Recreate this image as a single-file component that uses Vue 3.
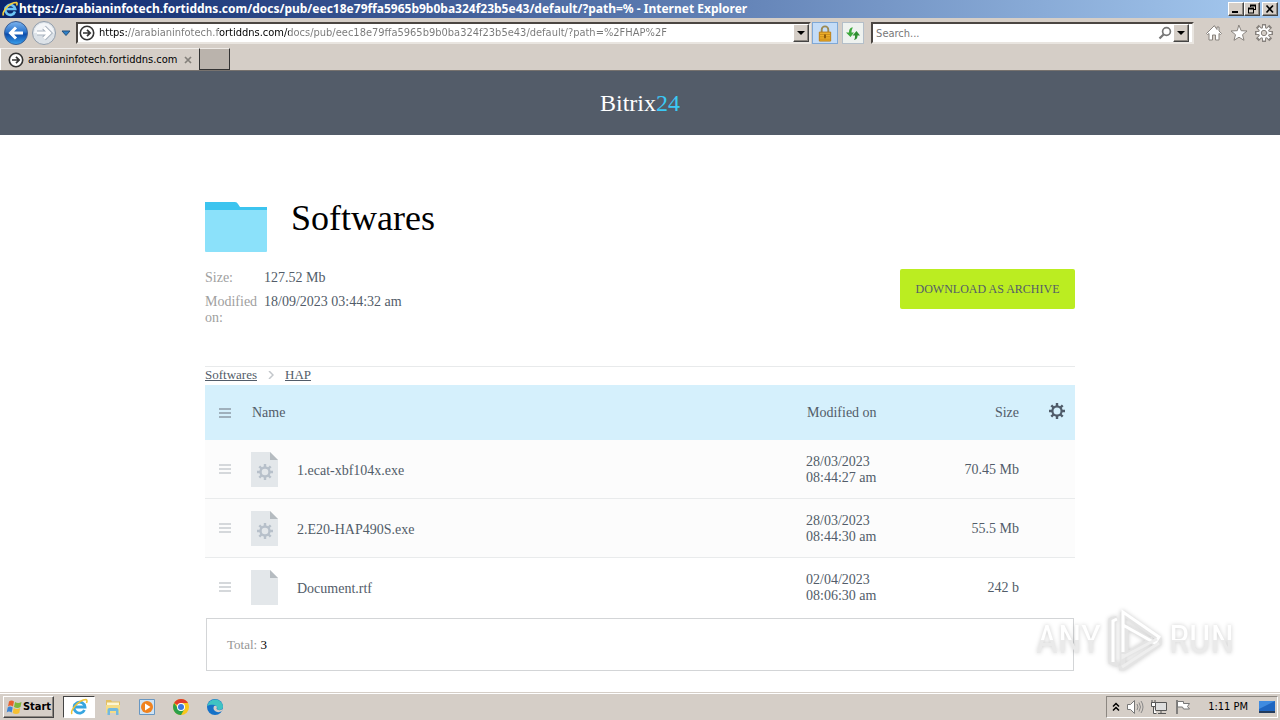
<template>
  <div class="desktop">
    <header class="titlebar">
      <svg class="title-icon" viewBox="0 0 16 16" aria-hidden="true">
        <path d="M13 10.5A5 5 0 1 1 13.2 8H4.5" fill="none" stroke="#6cc4f5" stroke-width="2.6" />
        <path d="M1.5 14.5C-.5 11 7 1.5 14.5 1.5 15.5 2 15 3.5 14.5 4.5" fill="none" stroke="#f6cf3c" stroke-width="1.6" />
      </svg>
      <h1 class="title-text">{{ windowTitle }}</h1>
      <div class="title-buttons">
        <button type="button" class="bevel win-button" aria-label="Minimize">
          <svg viewBox="0 0 12 10"><path d="M2 7h6v2H2z" /></svg>
        </button>
        <button type="button" class="bevel win-button" aria-label="Restore">
          <svg viewBox="0 0 12 10">
            <path d="M4 .5h6V6H8V5h1V2.5H5V3H4zM2 3.5h6V9.5H2zM3 5.5v3h4v-3z" fill-rule="evenodd" />
          </svg>
        </button>
        <button type="button" class="bevel win-button win-close" aria-label="Close">
          <svg viewBox="0 0 12 10"><path d="M2.5 1.5 9 8.5M9 1.5 2.5 8.5" stroke="#000" stroke-width="1.7" /></svg>
        </button>
      </div>
    </header>

    <div class="toolbar">
      <button type="button" class="nav-button" aria-label="Back">
        <svg viewBox="0 0 26 26">
          <defs>
            <linearGradient id="back" x2="0" y2="1">
              <stop offset="0" stop-color="#7db4ee" />
              <stop offset=".45" stop-color="#2c75cd" />
              <stop offset=".55" stop-color="#0b4cab" />
              <stop offset="1" stop-color="#3ba2ee" />
            </linearGradient>
          </defs>
          <circle cx="13" cy="13" r="11.5" fill="url(#back)" stroke="#3c5f94" />
          <path d="M20 13H8M13 7.5 7.5 13l5.5 5.5" fill="none" stroke="#fff" stroke-width="3" />
        </svg>
      </button>
      <button type="button" class="nav-button" aria-label="Forward">
        <svg viewBox="0 0 26 26">
          <circle cx="13" cy="13" r="11.5" fill="#dce2e8" stroke="#929eac" />
          <path d="M3 13a10 10 0 0 1 20 0z" fill="#f3f5f8" />
          <path d="M6 13h12M13 7.5l5.5 5.5-5.5 5.5" fill="none" stroke="#a9b3bf" stroke-width="5" />
          <path d="M6 13h12M13 7.5l5.5 5.5-5.5 5.5" fill="none" stroke="#fff" stroke-width="3" />
        </svg>
      </button>
      <button type="button" class="history-button" aria-label="Recent pages">
        <svg viewBox="0 0 10 7"><path d="M1 1h8L5 5.5z" fill="#2d80c8" stroke="#234f7c" /></svg>
      </button>
      <div class="sunken address">
        <svg class="site-icon" viewBox="0 0 16 16" aria-hidden="true">
          <circle cx="8" cy="8" r="6.7" fill="#fff" stroke="#333" stroke-width="1.6" />
          <path d="M4 8h7M8 4.8 11.2 8 8 11.2" fill="none" stroke="#333" stroke-width="1.7" />
        </svg>
        <input v-model="address" class="address-input" type="text" aria-label="Address" spellcheck="false" />
        <button type="button" class="bevel drop-button" aria-label="Show address list">
          <svg viewBox="0 0 8 4"><path d="M0 0h8L4 4z" /></svg>
        </button>
      </div>
      <button type="button" class="tool-button tool-lock" aria-label="Security report">
        <svg viewBox="0 0 16 18">
          <path d="M4.5 8V5a3.5 3.5 0 0 1 7 0v3" fill="none" stroke="#9c8a52" stroke-width="2" />
          <path d="M2 7.5h12V17H2z" fill="#eeb02a" stroke="#bb7a12" />
          <path d="M2.5 10h11M2.5 12.5h11M2.5 15h11" stroke="#c98a19" />
          <path d="M7 10h2v4H7z" fill="#8b5a0c" />
        </svg>
      </button>
      <button type="button" class="tool-button" aria-label="Refresh">
        <svg viewBox="0 0 16 16">
          <path d="M8 2C5 2 4 4 4 7H1l4.500 4.500L9 7H6.500C6.500 4.500 7 3.500 8 2z" fill="#3ca83c" />
          <path d="M9 14.500c3-.5 3.500-2.500 3.500-4.500H15L11.500 5.500 7.500 10h2.500c0 2 0 3-1 4.500z" fill="#2e8f31" />
        </svg>
      </button>
      <form class="sunken search" @submit.prevent>
        <input v-model="query" class="search-input" type="text" placeholder="Search..." aria-label="Search" />
        <button type="submit" class="search-go" aria-label="Go">
          <svg viewBox="0 0 14 14">
            <circle cx="8.5" cy="5.5" r="3.9" fill="none" stroke="#777" stroke-width="1.7" />
            <path d="M5.8 8.2 1.5 12.5" stroke="#777" stroke-width="2.2" />
          </svg>
        </button>
        <button type="button" class="bevel drop-button" aria-label="Search options">
          <svg viewBox="0 0 8 4"><path d="M0 0h8L4 4z" /></svg>
        </button>
      </form>
      <div class="commands">
        <button type="button" class="command" aria-label="Home">
          <svg viewBox="0 0 18 18">
            <path d="M9 2 1.5 9.5l1 1L4 9.500V16h3.500v-5h3v5H14V9.500l1.500 1 1-1L14 7V3h-2v2z" />
          </svg>
        </button>
        <button type="button" class="command" aria-label="Favorites">
          <svg viewBox="0 0 18 18">
            <path d="m9 1.500 2.200 5.200 5.800.3-4.500 3.700 1.500 5.600L9 13.200l-5 3.100 1.500-5.600L1 7l5.800-.3z" />
          </svg>
        </button>
        <button type="button" class="command" aria-label="Tools">
          <svg viewBox="0 0 18 18">
            <path :d="toolTeeth" stroke-width="4" />
            <circle cx="9" cy="9" r="5.5" />
            <path :d="toolTeeth" class="tooth-fill" />
            <circle cx="9" cy="9" r="2.7" fill="#d5cec7" />
          </svg>
        </button>
      </div>
    </div>

    <nav class="tabs" aria-label="Tabs">
      <div class="tab">
        <svg class="site-icon" viewBox="0 0 16 16" aria-hidden="true">
          <circle cx="8" cy="8" r="6.7" fill="#fff" stroke="#333" stroke-width="1.6" />
          <path d="M4 8h7M8 4.8 11.2 8 8 11.2" fill="none" stroke="#333" stroke-width="1.7" />
        </svg>
        <span class="tab-label">arabianinfotech.fortiddns.com</span>
        <button type="button" class="tab-close" aria-label="Close tab">
          <svg viewBox="0 0 8 8"><path d="m1 1 6 6M7 1 1 7" stroke="#84807b" stroke-width="1.7" /></svg>
        </button>
      </div>
      <button type="button" class="new-tab" aria-label="New tab"></button>
    </nav>

    <div class="page">
      <div class="brand">Bitrix<span class="brand-number">24</span></div>

      <main class="content">
        <div class="folder">
          <svg class="folder-icon" viewBox="0 0 62 50" aria-hidden="true">
            <path d="M0 0h30q2 0 3 2l2 3h27v10H0z" fill="#3cc4ef" />
            <path d="M0 8h62v41q0 1-1 1H1q-1 0-1-1z" fill="#8be1fa" />
          </svg>
          <h2 class="folder-name">Softwares</h2>
        </div>

        <div class="summary">
          <dl class="details">
            <dt>Size:</dt>
            <dd>127.52 Mb</dd>
            <dt>Modified on:</dt>
            <dd>18/09/2023 03:44:32 am</dd>
          </dl>
          <button type="button" class="download">DOWNLOAD AS ARCHIVE</button>
        </div>

        <nav class="breadcrumbs" aria-label="Folders">
          <a href="#">Softwares</a>
          <svg class="crumb-arrow" viewBox="0 0 6 8" aria-hidden="true">
            <path d="m1 0 4 4-4 4" fill="none" stroke="#c3c7cb" stroke-width="1.5" />
          </svg>
          <a href="#">HAP</a>
        </nav>

        <table class="files">
          <thead>
            <tr>
              <th class="col-drag"><span class="grip grip-dark"></span></th>
              <th class="col-name">Name</th>
              <th class="col-date">Modified on</th>
              <th class="col-size">Size</th>
              <th class="col-settings">
                <button type="button" class="settings" aria-label="Configure columns">
                  <svg viewBox="0 0 16 16">
                    <circle cx="8" cy="8" r="4.6" fill="none" stroke="#4f5b69" stroke-width="2.2" />
                    <path :d="gearTeeth" stroke="#4f5b69" stroke-width="2.4" />
                  </svg>
                </button>
              </th>
            </tr>
          </thead>
          <tbody>
            <tr v-for="file in files" :key="file.name">
              <td class="col-drag"><span class="grip"></span></td>
              <td class="col-name">
                <div class="file">
                  <svg class="file-icon" viewBox="0 0 27 35" aria-hidden="true">
                    <path d="M0 0h19l8 8v27H0z" fill="#e3e7ea" />
                    <path d="M19 0v8h8z" fill="#b5bbc0" />
                    <g v-if="file.isProgram" transform="translate(6 12)" fill="none" stroke="#b7c0ca">
                      <circle cx="8" cy="8" r="4.5" stroke-width="2.4" />
                      <path :d="gearTeeth" stroke-width="2.4" />
                    </g>
                  </svg>
                  <span class="file-name">{{ file.name }}</span>
                </div>
              </td>
              <td class="col-date">{{ file.date }}<br />{{ file.time }}</td>
              <td class="col-size">{{ file.size }}</td>
              <td class="col-settings"></td>
            </tr>
          </tbody>
        </table>

        <div class="total">Total: <span class="total-count">{{ files.length }}</span></div>
      </main>

      <div class="watermark" aria-hidden="true">
        <span class="watermark-text">ANY</span>
        <svg class="watermark-play" viewBox="0 0 58 64">
          <path d="M7 13v40M17 4v56M11 10 5 12v42l7 3M15 4l38 27v5L18 60h-5M20 18l30 18M20 47l27-16M20 18v29" fill="none" stroke="#e4e4e4" stroke-width="5" />
          <path d="M7 54V13l4-2M17 44V4l36 25-4 6-32-18" fill="none" stroke="#fff" stroke-width="3" />
          <path d="M17 46v3l34-18M16 59l37-24" fill="none" stroke="#eee" stroke-width="3" />
        </svg>
        <span class="watermark-text">RUN</span>
      </div>
    </div>

    <footer class="taskbar">
      <button type="button" class="bevel start">
        <svg viewBox="0 0 16 16" aria-hidden="true">
          <path d="M3 2.5q2.5-2 5 0L7 7.5q-3-2-5 0z" fill="#e8602c" />
          <path d="M9 3q3 2 6.500 0L14.500 8q-3 2-6.500 0z" fill="#7db83a" />
          <path d="M1.700 8.500q2-2 5 0l-1 5q-3-2-5 0z" fill="#3c84d4" />
          <path d="M7.700 9q3 2 6.500 0l-1 5q-3 2-6.500 0z" fill="#f5c032" />
        </svg>
        Start
      </button>
      <button type="button" class="task is-active" aria-label="Internet Explorer">
        <svg viewBox="0 0 18 18">
          <path d="M14.5 12A5.5 5.5 0 1 1 15 9H5" fill="none" stroke="#36a5e0" stroke-width="2.8" />
          <path d="M2 16C0 13 8 2 16 1.500c1.500.5 1 2 .5 3.500" fill="none" stroke="#efc336" stroke-width="1.5" />
        </svg>
      </button>
      <button type="button" class="task" aria-label="Explorer">
        <svg viewBox="0 0 18 18">
          <path d="M2 2h5l1 1.500h8V14H2z" fill="#e3bf62" />
          <path d="M3 4.500h12v3H3z" fill="#fdf6d3" />
          <path d="M2 7h14v8H2z" fill="#f5dc87" />
          <path d="M3.500 17v-5q0-2 2-2h7q2 0 2 2v5H12v-4H6v4z" fill="#72b9df" />
        </svg>
      </button>
      <button type="button" class="task" aria-label="Media Player">
        <svg viewBox="0 0 18 18">
          <path d="M1.500 1.500h15v15h-15z" fill="#cfe3f4" stroke="#6897c2" />
          <circle cx="9" cy="9" r="6" fill="#f0821e" />
          <path d="M7 5.500v7L12.500 9z" fill="#fff" />
        </svg>
      </button>
      <button type="button" class="task" aria-label="Chrome">
        <svg viewBox="0 0 18 18">
          <circle cx="9" cy="9" r="8" fill="#f9c71c" />
          <path d="M9 9 2.100 5A8 8 0 0 1 16 5H9z" fill="#e03c2d" />
          <path d="M9 9H5L2.100 5A8 8 0 0 0 9 17l3.500-6z" fill="#2ca04a" />
          <circle cx="9" cy="9" r="4" fill="#fff" />
          <circle cx="9" cy="9" r="3" fill="#3b78e0" />
        </svg>
      </button>
      <button type="button" class="task" aria-label="Edge">
        <svg viewBox="0 0 18 18">
          <circle cx="9" cy="9" r="8" fill="#1672c8" />
          <path d="M1.200 8A8 8 0 0 1 17 8.500c0 3-3 4-6 3 2-4-5-6.500-9.800-3.500z" fill="#3fc3c3" />
          <path d="M8 8q-2 4 3 6 3 .5 5-1l1-2q-3 2-6 .5Q10 10 11 9q-1-2-3-1z" fill="#d5cec7" />
        </svg>
      </button>
      <div class="tray">
        <svg class="tray-more" viewBox="0 0 8 10" aria-hidden="true">
          <path d="m1 4.500 3-3 3 3M1 8.500l3-3 3 3" fill="none" stroke="#000" stroke-width="1.5" />
        </svg>
        <svg class="tray-icon" viewBox="0 0 18 16" aria-hidden="true">
          <path d="M1.500 5.500h3l4-4v13l-4-4h-3z" fill="#fff" stroke="#777" />
          <path d="M11 5q2 3 0 6M13 3.500q3 4.500 0 9M15 2q4 6 0 12" fill="none" stroke="#888" />
        </svg>
        <svg class="tray-icon" viewBox="0 0 18 16" aria-hidden="true">
          <path d="M5.500 3.500h11v8h-11z" fill="#dedede" stroke="#555" />
          <path d="M8 14.500h8M11 12v2" stroke="#555" />
          <path d="M2 1v3M5 1v3M1.500 3.500h4v4h-4zM3.500 7.500v7h3" fill="#fff" stroke="#555" />
        </svg>
        <svg class="tray-icon" viewBox="0 0 18 16" aria-hidden="true">
          <path d="M3 1v14" stroke="#666" stroke-width="1.5" />
          <path d="M3.500 2.500h6v2h6l-2 3 2 2.500h-6l-1-2h-5z" fill="#fff" stroke="#777" />
        </svg>
        <time class="clock">1:11 PM</time>
        <svg class="tray-desktop" viewBox="0 0 16 14" aria-hidden="true">
          <path d="M0 1h16v10H0z" fill="#1f66c1" />
          <path d="M0 1h16L0 9z" fill="#3f8be0" />
          <path d="M0 11h16v2H0z" fill="#233b5c" />
        </svg>
      </div>
    </footer>
  </div>
</template>

<script setup>
import { ref } from 'vue'

const windowTitle =
  'https://arabianinfotech.fortiddns.com/docs/pub/eec18e79ffa5965b9b0ba324f23b5e43/default/?path=% - Internet Explorer'

const address = ref(
  'https://arabianinfotech.fortiddns.com/docs/pub/eec18e79ffa5965b9b0ba324f23b5e43/default/?path=%2FHAP%2F'
)
const query = ref('')

// eight teeth around a 16x16 gear
const gearTeeth =
  'M8 0v3M8 13v3M0 8h3M13 8h3M2.3 2.3l2.2 2.2M11.5 11.5l2.2 2.2M2.3 13.7l2.2-2.2M11.5 4.5l2.2-2.2'

// same thing for the 18x18 toolbar gear
const toolTeeth =
  'M9 1.5v3M9 13.5v3M1.5 9h3M13.500 9h3M3.700 3.700l2.200 2.200M12.100 12.100l2.200 2.200M3.700 14.300l2.200-2.200M12.100 5.900l2.200-2.200'

const files = [
  { name: '1.ecat-xbf104x.exe', date: '28/03/2023', time: '08:44:27 am', size: '70.45 Mb', isProgram: true },
  { name: '2.E20-HAP490S.exe', date: '28/03/2023', time: '08:44:30 am', size: '55.5 Mb', isProgram: true },
  { name: 'Document.rtf', date: '02/04/2023', time: '08:06:30 am', size: '242 b', isProgram: false }
]
</script>

<style>
body {
  margin: 0;
  background: #fff;
}
</style>

<style scoped>
.desktop {
  display: flex;
  flex-direction: column;
  min-height: 100vh;
  font-family: Tahoma, 'DejaVu Sans Condensed', 'DejaVu Sans', sans-serif;
  font-size: 11px;
  color: #000;
}

.desktop * {
  box-sizing: border-box;
}

button {
  display: flex;
  align-items: center;
  justify-content: center;
  padding: 0;
  border: 0;
  background: none;
  font: inherit;
  color: inherit;
}

svg {
  display: block;
  flex: none;
}

.bevel {
  background: #d5cec7;
  border: 1px solid;
  border-color: #fff #444 #444 #fff;
  box-shadow: inset -1px -1px 0 #8c8781;
}

.sunken {
  display: flex;
  align-items: center;
  height: 22px;
  background: #fff;
  border: 2px solid;
  border-color: #4b4642 #e9e5e0 #e9e5e0 #4b4642;
}

/* title bar */
.titlebar {
  display: flex;
  align-items: center;
  height: 18px;
  padding: 0 2px;
  background: linear-gradient(90deg, #0a246a, #a6caf0);
}

.title-icon {
  width: 16px;
  height: 16px;
}

.title-text {
  flex: 1;
  margin: 0 0 0 1px;
  overflow: hidden;
  font-family: Tahoma, 'Noto Sans', sans-serif;
  font-size: 12px;
  line-height: 18px;
  font-weight: bold;
  white-space: nowrap;
  color: #fff;
}

.title-buttons {
  display: flex;
}

.win-button {
  width: 16px;
  height: 14px;
}

.win-button svg {
  width: 12px;
  height: 10px;
}

.win-close {
  margin-left: 2px;
}

/* toolbar */
.toolbar {
  display: flex;
  align-items: center;
  height: 30px;
  padding: 0 7px 0 2px;
  background: #d5cec7;
}

.nav-button {
  width: 28px;
}

.nav-button svg {
  width: 26px;
  height: 26px;
}

.history-button {
  width: 16px;
  margin-right: 2px;
}

.history-button svg {
  width: 10px;
  height: 7px;
}

.address {
  flex: 7;
  min-width: 0;
  padding-left: 1px;
}

.site-icon {
  width: 16px;
  height: 16px;
}

.address-input {
  flex: 1;
  min-width: 0;
  margin-left: 4px;
  padding: 0;
  border: 0;
  outline: 0;
  font: inherit;
  line-height: 16px;
  color: transparent;
  /* scheme and domain are black, everything else is grey */
  background: linear-gradient(90deg, #000 28px, #777 28px, #777 119px, #000 119px, #000 190px, #777 190px);
  background-clip: text;
}

.drop-button {
  width: 16px;
  height: 18px;
}

.drop-button svg {
  width: 8px;
  height: 4px;
}

.tool-button {
  width: 22px;
  height: 22px;
  margin-left: 4px;
  border: 1px solid #b4bfc9;
  background: #eef2ef;
}

.tool-button svg {
  width: 16px;
  height: 17px;
}

.tool-lock {
  width: 26px;
  margin-left: 1px;
  border-color: #7fa8d6;
  background: #c4dcf7;
}

.search {
  flex: 3;
  min-width: 0;
  margin-left: 7px;
  padding: 0 3px;
}

.search-input {
  flex: 1;
  min-width: 0;
  padding: 0;
  border: 0;
  outline: 0;
  font: inherit;
}

.search-input::placeholder {
  color: #777;
}

.search-go svg {
  width: 14px;
  height: 14px;
}

.search-go {
  margin-right: 1px;
}

.commands {
  display: flex;
  gap: 7px;
  margin-left: 11px;
}

.command svg {
  width: 18px;
  height: 18px;
  fill: #fff;
  stroke: #88837e;
  stroke-width: 1;
  stroke-linecap: square;
}

.command .tooth-fill {
  stroke: #fff;
  stroke-width: 2;
  stroke-linecap: butt;
}

/* tabs */
.tabs {
  display: flex;
  height: 23px;
  background: #d5cec7;
  border-bottom: 1px solid #77726e;
}

.tab {
  display: flex;
  align-items: center;
  width: 199px;
  padding: 0 7px;
  border-left: 1px solid #fff;
  border-top: 1px solid #f1eeeb;
}

.tab-label {
  flex: 1;
  margin-left: 4px;
  white-space: nowrap;
}

.tab-close svg {
  width: 8px;
  height: 8px;
}

.new-tab {
  width: 31px;
  background: #bab3ac;
  border: 1px solid;
  border-color: #eeeae6 #333 #333 #333;
}

/* page */
.page {
  position: relative;
  flex: 1;
  background: #fff;
  font-family: 'Times New Roman', 'Liberation Serif', serif;
  font-size: 14px;
  line-height: 16px;
  color: #525c69;
}

.brand {
  height: 64px;
  background: #535c69;
  font-size: 24px;
  line-height: 64px;
  text-align: center;
  color: #fff;
}

.brand-number {
  color: #3bc8f5;
}

.content {
  max-width: 870px;
  margin: 0 auto;
  padding: 67px 0 21px;
}

.folder {
  display: flex;
  gap: 24px;
}

.folder-icon {
  width: 62px;
  height: 50px;
}

.folder-name {
  margin: 0;
  font-size: 36px;
  line-height: 32px;
  font-weight: normal;
  color: #000;
}

.summary {
  display: flex;
  justify-content: space-between;
  align-items: flex-start;
  margin-top: 17px;
}

.details {
  display: grid;
  grid-template-columns: 55px auto;
  gap: 8px 4px;
  margin: 0;
  padding-top: 1px;
}

.details dt {
  color: #a0a0a0;
}

.details dd {
  margin: 0;
}

.download {
  min-width: 175px;
  height: 40px;
  padding: 0 14px;
  border-radius: 2px;
  background: #bbed21;
  font-size: 12px;
  color: #535c69;
}

.breadcrumbs {
  display: flex;
  align-items: center;
  margin-top: 40px;
  padding-bottom: 2px;
  border-top: 1px solid #e8eaeb;
  font-size: 13px;
  line-height: 16px;
}

.breadcrumbs a {
  color: #525c69;
}

.crumb-arrow {
  width: 6px;
  height: 8px;
  margin: 0 11px;
}

/* file list */
.files {
  width: 100%;
  border-spacing: 0;
  table-layout: fixed;
}

.files th,
.files td {
  padding: 0;
  text-align: left;
  font-weight: normal;
}

.files th {
  height: 55px;
  background: #d5f0fc;
}

.files td {
  height: 59px;
  border-bottom: 1px solid #e9ebec;
  background: #fcfcfc;
}

.files tr:last-child td {
  border-bottom-color: transparent;
  background: #fff;
}

.files .col-drag {
  width: 46px;
  padding-left: 14px;
}

.files .col-date {
  width: 120px;
}

.files .col-size {
  width: 93px;
  text-align: right;
}

.files td.col-date,
.files td.col-size {
  padding-top: 2px;
}

.files th.col-name,
.files th.col-date {
  padding-left: 1px;
}

.files .col-settings {
  width: 56px;
  padding-left: 30px;
}

.files th.col-settings {
  padding-bottom: 3px;
}

.grip {
  display: block;
  width: 12px;
  height: 10px;
  border: solid #d5d8db;
  border-width: 2px 0;
  background: linear-gradient(#d5d8db, #d5d8db) center / 100% 2px no-repeat;
}

.grip-dark {
  border-color: #9fb0bc;
  background-image: linear-gradient(#9fb0bc, #9fb0bc);
}

.settings svg {
  width: 16px;
  height: 16px;
}

.file {
  display: flex;
  align-items: center;
  gap: 19px;
}

.file-icon {
  width: 27px;
  height: 35px;
}

.file-name {
  padding-top: 3px;
}

.total {
  margin: 1px 1px 0;
  padding: 18px 20px 17px;
  border: 1px solid #d3d5d7;
  font-size: 13px;
  color: #959595;
}

.total-count {
  color: #000;
}

/* watermark lies over the page */
.watermark {
  position: absolute;
  right: 46px;
  bottom: 20px;
  display: flex;
  align-items: center;
  gap: 5px;
  filter: drop-shadow(0 0 2px rgba(0, 0, 0, 0.2));
  pointer-events: none;
}

.watermark-text {
  font-family: 'Liberation Sans Narrow', 'Roboto Condensed', Roboto, sans-serif;
  font-size: 38px;
  line-height: 48px;
  color: transparent;
  background: linear-gradient(#fff 50%, #eaeaea 50%);
  background-clip: text;
}

.watermark-play {
  width: 58px;
  height: 64px;
}

/* taskbar */
.taskbar {
  display: flex;
  align-items: center;
  height: 28px;
  padding: 0 2px 0 3px;
  background: #d5cec7;
  border-top: 1px solid #d5cec7;
  box-shadow: inset 0 1px 0 #fff;
}

.start {
  height: 22px;
  gap: 1px;
  width: 51px;
  font-weight: bold;
}

.start svg {
  width: 16px;
  height: 16px;
}

.task {
  width: 32px;
  height: 22px;
  margin-right: 2px;
}

.task svg {
  width: 18px;
  height: 18px;
}

.task.is-active {
  margin-left: 9px;
  border: 1px solid;
  border-color: #444 #fff #fff #444;
  background: #fff;
}

.tray {
  display: flex;
  align-items: center;
  gap: 6px;
  height: 22px;
  margin-left: auto;
  padding: 0 2px 0 5px;
  border: 1px solid;
  border-color: #8c8781 #fff #fff #8c8781;
}

.tray-more {
  width: 8px;
  height: 10px;
}

.tray-icon {
  width: 18px;
  height: 16px;
}

.clock {
  margin: 0 5px 0 10px;
}

.tray-desktop {
  width: 16px;
  height: 14px;
}
</style>
